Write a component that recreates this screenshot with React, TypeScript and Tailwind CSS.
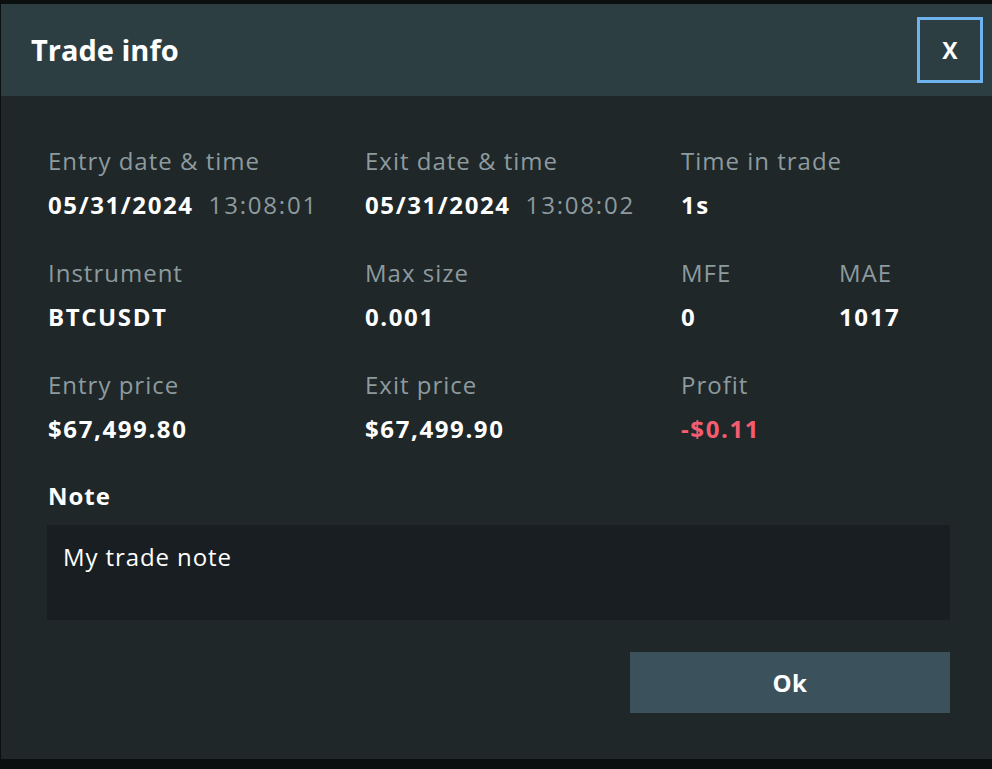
export default function App() {
  return (
    <div className="h-screen w-full bg-[#0b0f10] pt-[4px] pl-[1px] pb-[10px] font-['Open_Sans','Noto_Sans',sans-serif]">
      <div className="flex h-full flex-col bg-[#1f2729]">
        {/* header */}
        <div className="flex h-[92px] items-center justify-between bg-[#2d3e43] pl-[30px] pr-[9px]">
          <h1 className="text-[29px] font-bold text-white">Trade info</h1>
          <button className="flex h-[66px] w-[66px] items-center justify-center border-[3px] border-[#6fb3ee] text-[23px] font-bold text-white">
            X
          </button>
        </div>

        {/* body */}
        <div className="flex flex-col px-[46px] pt-[49px]">
          <div className="grid grid-cols-[317px_316px_158px_158px] gap-y-[36px] text-[24px] leading-[32px]">
            <Field label="Entry date & time">
              <Value>05/31/2024</Value>
              <span className="ml-[15px] tracking-[1.8px] text-[#8d9a9e]">13:08:01</span>
            </Field>
            <Field label="Exit date & time">
              <Value>05/31/2024</Value>
              <span className="ml-[15px] tracking-[1.8px] text-[#8d9a9e]">13:08:02</span>
            </Field>
            <Field label="Time in trade" className="col-span-2">
              <Value>1s</Value>
            </Field>

            <Field label="Instrument">
              <Value>BTCUSDT</Value>
            </Field>
            <Field label="Max size">
              <Value>0.001</Value>
            </Field>
            <Field label="MFE">
              <Value>0</Value>
            </Field>
            <Field label="MAE">
              <Value>1017</Value>
            </Field>

            <Field label="Entry price">
              <Value>$67,499.80</Value>
            </Field>
            <Field label="Exit price">
              <Value>$67,499.90</Value>
            </Field>
            <Field label="Profit" className="col-span-2">
              <span className="font-bold tracking-[1.6px] text-[#f45d6f]">-$0.11</span>
            </Field>
          </div>

          <div className="mt-[35px] pl-[1px] text-[24px] font-bold leading-[32px] tracking-[1px] text-white">Note</div>
          <div className="mt-[13px] h-[95px] w-[903px] bg-[#181e21] px-[16px] py-[16px] text-[24px] leading-[32px] tracking-[0.9px] text-white">
            My trade note
          </div>

          <div className="mt-[32px] flex w-[903px] justify-end">
            <button className="h-[61px] w-[320px] bg-[#3b525c] text-[24px] font-bold tracking-[0.5px] text-white">Ok</button>
          </div>
        </div>
      </div>
    </div>
  );
}

function Value({ children }: { children: React.ReactNode }) {
  return <span className="font-bold tracking-[1.6px] text-white">{children}</span>;
}

function Field({
  label,
  className,
  children,
}: {
  label: string;
  className?: string;
  children: React.ReactNode;
}) {
  return (
    <div className={`pl-[1px] ${className ?? ""}`}>
      <div className="tracking-[1px] text-[#8d9a9e]">{label}</div>
      <div className="mt-[12px] whitespace-nowrap">{children}</div>
    </div>
  );
}
